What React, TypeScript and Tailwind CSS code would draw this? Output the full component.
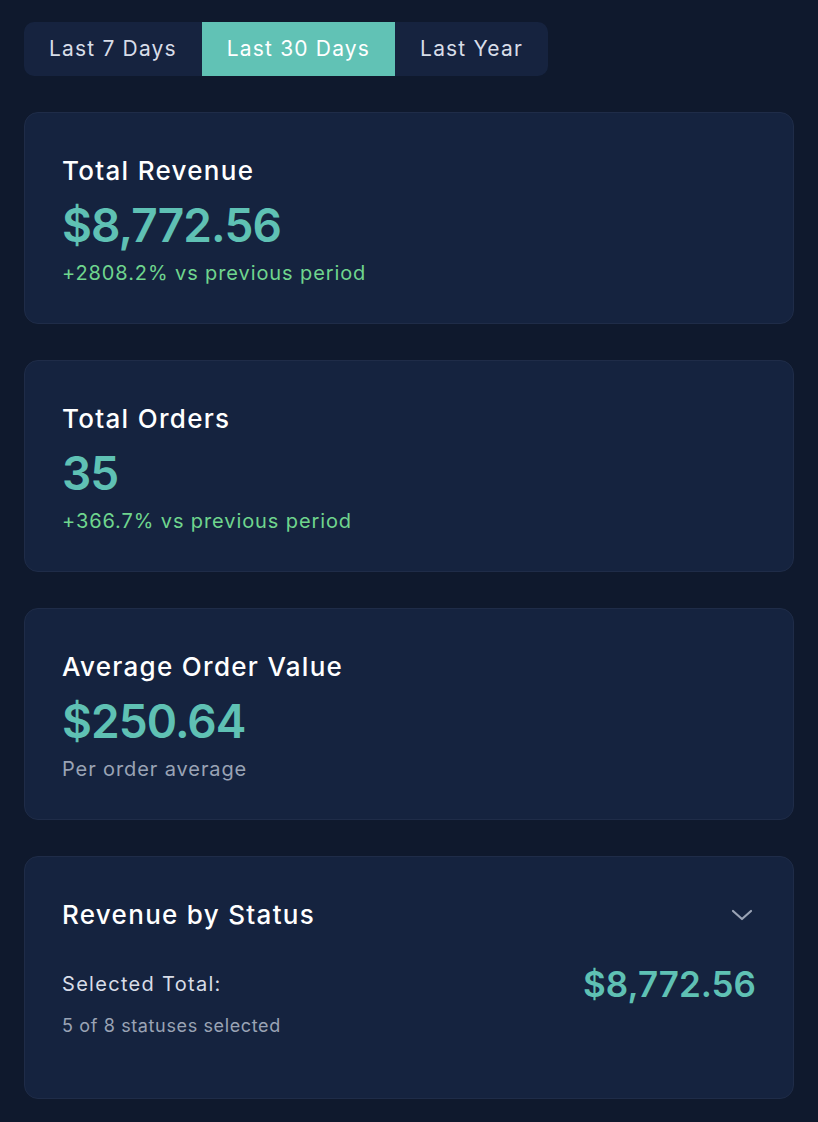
const ranges = ['Last 7 Days', 'Last 30 Days', 'Last Year'];

function StatCard({ title, value, note, noteClass }: { title: string; value: string; note: string; noteClass: string }) {
  return (
    <div className="rounded-[14px] border border-[#1f2c48] bg-[#15233f] px-[37px] pt-[42px] pb-[36px]">
      <div className="text-[26px] leading-[32px] font-medium tracking-[0.05em] text-white">{title}</div>
      <div className="mt-[12px] text-[46px] leading-[52px] font-semibold tracking-[-0.02em] text-[#5fc1b4]">{value}</div>
      <div className={`mt-[8px] text-[20px] leading-[28px] tracking-[0.045em] ${noteClass}`}>{note}</div>
    </div>
  );
}

export default function App() {
  return (
    <div className="min-h-screen w-full bg-[#0f192d] px-[24px] pt-[22px] pb-[24px] font-['Inter',sans-serif] antialiased">
      {/* Date range switch */}
      <div className="inline-flex h-[54px] overflow-hidden rounded-[10px] bg-[#16233f]">
        {ranges.map((r) => (
          <button
            key={r}
            className={`px-[25px] text-[21px] tracking-[0.056em] ${r === 'Last 30 Days' ? 'bg-[#61c2b5] text-white' : 'text-[#d8dde8]'}`}
          >
            {r}
          </button>
        ))}
      </div>

      <div className="mt-[36px] flex flex-col gap-[36px]">
        <StatCard title="Total Revenue" value="$8,772.56" note="+2808.2% vs previous period" noteClass="text-[#6fd58e]" />
        <StatCard title="Total Orders" value="35" note="+366.7% vs previous period" noteClass="text-[#6fd58e]" />
        <StatCard title="Average Order Value" value="$250.64" note="Per order average" noteClass="text-[#9aa3b5]" />

        <div className="rounded-[14px] border border-[#1f2c48] bg-[#15233f] px-[37px] pt-[42px] pb-[60px]">
          <div className="flex h-[32px] items-center justify-between">
            <div className="text-[26px] leading-[32px] font-medium tracking-[0.05em] text-white">Revenue by Status</div>
            <svg width="22" height="14" viewBox="0 0 22 14" fill="none" className="mr-[3px]">
              <path d="M2 3l9 8 9-8" stroke="#9aa3b5" strokeWidth="2.2" strokeLinecap="round" strokeLinejoin="round" />
            </svg>
          </div>
          <div className="mt-[33px] flex items-center justify-between">
            <div className="text-[20px] leading-[28px] tracking-[0.065em] text-[#d8dde8]">Selected Total:</div>
            <div className="text-[35px] leading-[40px] font-semibold text-[#5fc1b4]">$8,772.56</div>
          </div>
          <div className="mt-[10px] text-[18px] leading-[24px] tracking-[0.035em] text-[#9aa3b5]">5 of 8 statuses selected</div>
        </div>
      </div>
    </div>
  );
}
